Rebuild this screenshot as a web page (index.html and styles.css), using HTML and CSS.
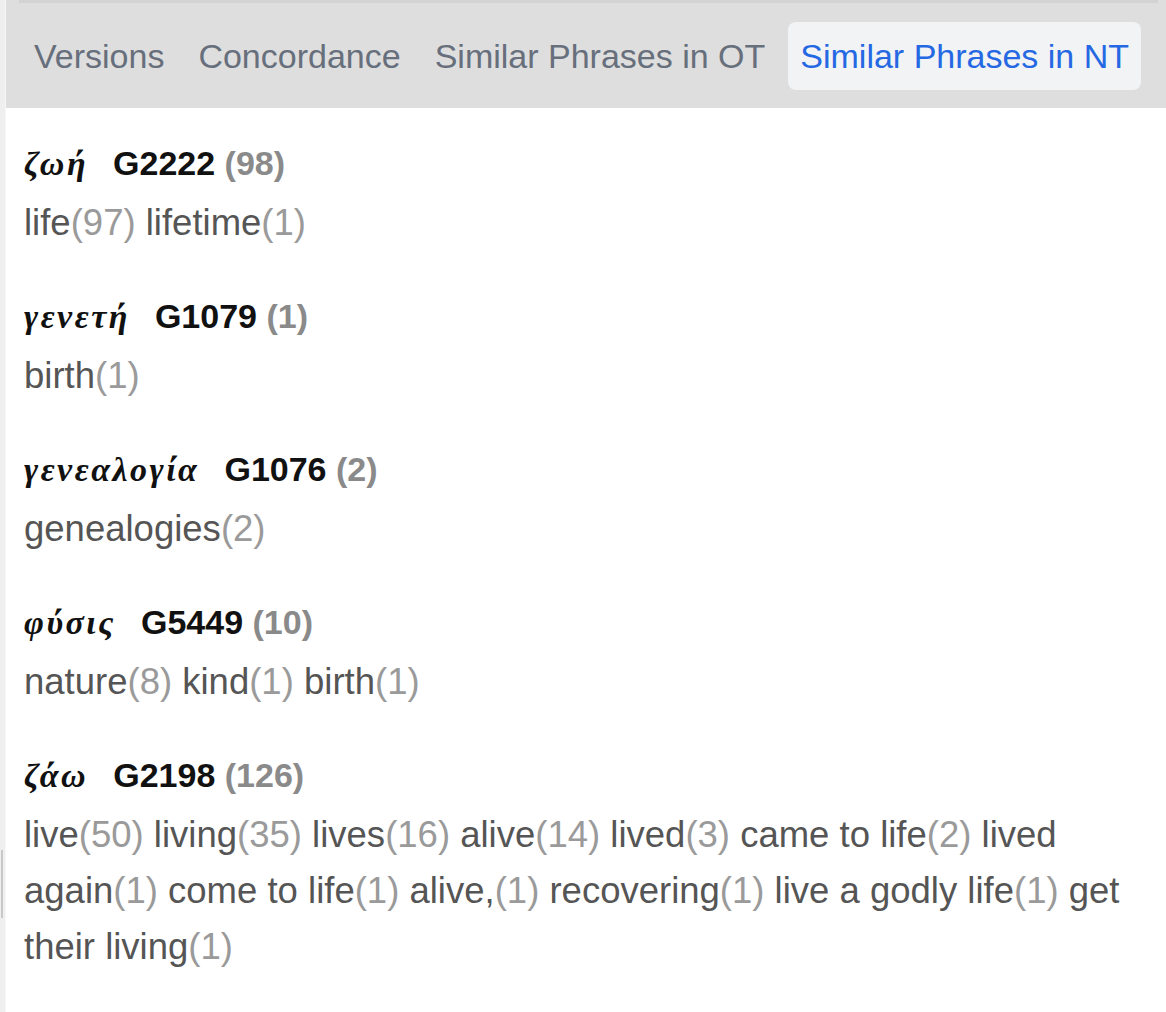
FILE: index.html
```html
<!DOCTYPE html>
<html lang="en">
<head>
<meta charset="utf-8">
<title>Similar Phrases in NT</title>
<link rel="stylesheet" href="styles.css">
</head>
<body>
<div class="page">
  <div class="gutter"><div class="gutter-mark"></div></div>
  <div class="panel">
    <div class="tabbar">
      <div class="topline"></div>
      <nav class="tabs">
        <span class="tab">Versions</span>
        <span class="tab">Concordance</span>
        <span class="tab">Similar Phrases in OT</span>
        <span class="tab active">Similar Phrases in NT</span>
      </nav>
    </div>
    <div class="content">
      <div class="entry">
        <div class="head"><span class="greek">ζωή</span><span class="code">G2222</span> <span class="total">(98)</span></div>
        <div class="uses">life<span class="n">(97)</span> lifetime<span class="n">(1)</span></div>
      </div>
      <div class="entry">
        <div class="head"><span class="greek">γενετή</span><span class="code">G1079</span> <span class="total">(1)</span></div>
        <div class="uses">birth<span class="n">(1)</span></div>
      </div>
      <div class="entry">
        <div class="head"><span class="greek">γενεαλογία</span><span class="code">G1076</span> <span class="total">(2)</span></div>
        <div class="uses">genealogies<span class="n">(2)</span></div>
      </div>
      <div class="entry">
        <div class="head"><span class="greek">φύσις</span><span class="code">G5449</span> <span class="total">(10)</span></div>
        <div class="uses">nature<span class="n">(8)</span> kind<span class="n">(1)</span> birth<span class="n">(1)</span></div>
      </div>
      <div class="entry">
        <div class="head"><span class="greek">ζάω</span><span class="code">G2198</span> <span class="total">(126)</span></div>
        <div class="uses">live<span class="n">(50)</span> living<span class="n">(35)</span> lives<span class="n">(16)</span> alive<span class="n">(14)</span> lived<span class="n">(3)</span> came to life<span class="n">(2)</span> lived again<span class="n">(1)</span> come to life<span class="n">(1)</span> alive,<span class="n">(1)</span> recovering<span class="n">(1)</span> live a godly life<span class="n">(1)</span> get their living<span class="n">(1)</span></div>
      </div>
    </div>
  </div>
</div>
</body>
</html>
```

FILE: styles.css
```css
html, body {
  margin: 0;
  padding: 0;
  background: #ffffff;
}

body {
  font-family: "Liberation Sans", Arial, sans-serif;
}

.page {
  display: flex;
  min-height: 1012px;
}

.gutter {
  width: 6px;
  flex: none;
  background: #efefef;
  border-right: 1px solid #f7f7f7;
  box-sizing: border-box;
  display: flex;
  flex-direction: column;
}

.gutter-mark {
  margin-top: 850px;
  margin-left: 1px;
  width: 2px;
  height: 68px;
  background: #c8c8c8;
}

.panel {
  flex: 1;
  min-width: 0;
}

.tabbar {
  background: #dedede;
  height: 108px;
  box-sizing: border-box;
}

.topline {
  height: 3px;
  margin: 0 8px 0 13px;
  background: #d3d3d3;
}

.tabs {
  display: flex;
  gap: 12px;
  margin-top: 19px;
  padding-left: 17px;
}

.tab {
  height: 68px;
  line-height: 68px;
  padding: 0 11px;
  font-size: 34px;
  color: #676f7c;
  border-radius: 8px;
  white-space: nowrap;
}

.tab.active {
  background: #f2f3f5;
  color: #2568e3;
  padding: 0 12px;
}

.content {
  padding: 27px 24px 0 18px;
}

.entry {
  margin-bottom: 37px;
}

.head {
  height: 56px;
  line-height: 56px;
  font-size: 34px;
  font-weight: bold;
  color: #111111;
  white-space: nowrap;
}

.greek {
  font-family: "Liberation Serif", "DejaVu Serif", serif;
  font-size: 34px;
  font-weight: bold;
  font-style: italic;
  letter-spacing: 2.5px;
  margin-right: 25px;
}

.code {
  color: #111111;
}

.total {
  color: #8a8a8a;
}

.uses {
  margin-top: 4px;
  font-size: 36.5px;
  line-height: 56px;
  color: #555555;
}

.n {
  color: #9a9a9a;
}
```
